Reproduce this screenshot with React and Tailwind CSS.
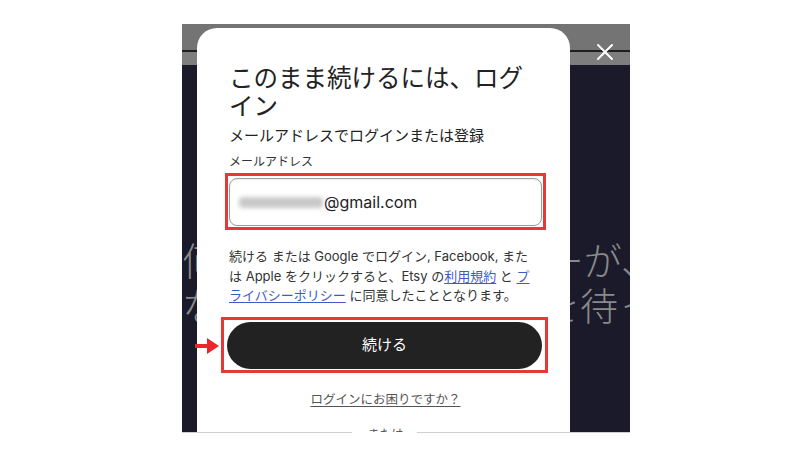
import React from 'react';

const font = { fontFamily: 'Inter, "Noto Sans CJK JP", sans-serif' };

const Arrow = () => (
  <svg width="24" height="16" viewBox="0 0 24 16" className="absolute left-[13px] top-[314px]">
    <rect x="0" y="6" width="14" height="4" fill="#e8262b" />
    <polygon points="12,0 24,8 12,16" fill="#e8262b" />
  </svg>
);

const CloseIcon = () => (
  <svg width="18" height="18" viewBox="0 0 18 18" className="absolute right-[16px] top-[19px]">
    <path d="M2 2 L16 16 M16 2 L2 16" stroke="#fff" strokeWidth="2" strokeLinecap="round" />
  </svg>
);

export default function App() {
  return (
    <div className="min-h-screen bg-white flex flex-col items-center pt-[24px]" style={font}>
      <div className="relative w-[448px] h-[408px] overflow-hidden flex flex-col">
        <div className="h-[26px] bg-[#747474]"></div>
        <div className="h-[2px] bg-[#1e1e1e]"></div>
        <div className="h-[13px] bg-[#7e7e7e]"></div>
        <div
          className="flex-1 bg-[#1b1a2b] flex flex-col pt-[171px] text-[38px] leading-[45px] text-[#8a8a8a] font-light"
          style={{ fontFamily: '"Noto Sans CJK JP", sans-serif' }}
        >
          <div className="flex justify-between whitespace-nowrap">
            <span>何か</span>
            <span className="mr-[-29px]">ーが、</span>
          </div>
          <div className="flex justify-between whitespace-nowrap">
            <span>なた</span>
            <span className="mr-[-26px]">を待っ</span>
          </div>
        </div>

        <CloseIcon />

        {/* modal */}
        <div className="absolute left-[15px] top-[4px] w-[373px] h-[440px] bg-white rounded-t-[20px] pl-8 pr-7 pt-[36px] flex flex-col text-[#222]">
          <h1 className="text-[24.5px] leading-[28px] font-normal">このまま続けるには、ログイン</h1>
          <p className="mt-[6px] text-[15px] leading-[20px]">メールアドレスでログインまたは登録</p>
          <label className="mt-2 text-[12px] leading-[16px] text-[#333]">メールアドレス</label>

          <div className="mt-[3px] -mx-1 border-[3px] border-[#e53935] pt-[2px] pb-[1px] px-[1px]">
            <div className="h-[48px] rounded-[8px] border-[1.5px] border-[#9c9c9c] shadow-[inset_0_1px_2px_rgba(0,0,0,0.08)] flex items-center pl-[9px]">
              <div className="w-[84px] h-[11px] rounded bg-[#c9c9c9] blur-[2px]"></div>
              <span className="ml-[1px] text-[16px] text-[#222]">@gmail.com</span>
            </div>
          </div>

          <div className="mt-[17px] text-[13px] leading-[19.5px] text-[#333] whitespace-nowrap">
            <div>続ける または Google でログイン, Facebook, また</div>
            <div>
              は Apple をクリックすると、Etsy の
              <a className="text-[#3d5bc6] underline underline-offset-2">利用規約</a> と{' '}
              <a className="text-[#3d5bc6] underline underline-offset-2">プ</a>
            </div>
            <div>
              <a className="text-[#3d5bc6] underline underline-offset-2">ライバシーポリシー</a> に同意したこととなります。
            </div>
          </div>

          <div className="mt-[11px] -ml-[8px] -mr-[6px] border-[3px] border-[#e53935] pt-[2px] pb-[1px] px-[3px]">
            <button className="w-full h-[47px] rounded-full bg-[#222] text-white text-[15px]">続ける</button>
          </div>

          <a className="mt-[18px] self-center text-[12.5px] leading-[18px] text-[#555] underline underline-offset-2">
            ログインにお困りですか？
          </a>
          <div className="mt-[17px] self-center text-[12px] text-[#555]">または</div>
        </div>

        <Arrow />
      </div>
      <div className="flex w-[448px] h-px">
        <div className="w-[170px] h-px bg-[#cfcfcf]"></div>
        <div className="w-[65px]"></div>
        <div className="flex-1 h-px bg-[#cfcfcf]"></div>
      </div>
    </div>
  );
}
